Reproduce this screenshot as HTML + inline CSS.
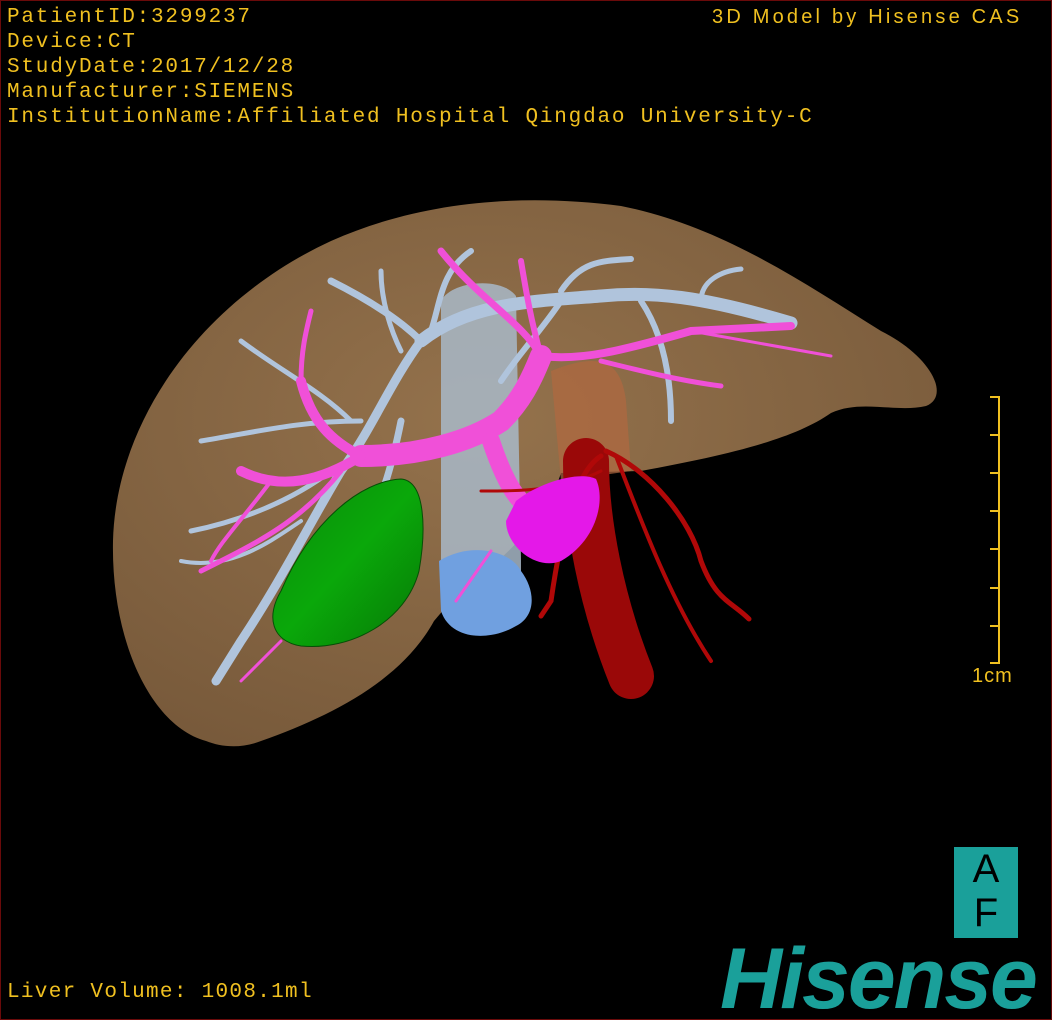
<!DOCTYPE html>
<html><head><meta charset="utf-8"><style>
html,body{margin:0;padding:0;background:#000}
#c{position:relative;width:1050px;height:1018px;border:1px solid #6a0a0a;background:#000;overflow:hidden;font-family:"Liberation Mono","DejaVu Sans Mono",monospace}
.t{position:absolute;color:#f0c020;font-size:21px;line-height:25px;white-space:pre;letter-spacing:1.8px}
</style></head><body><div id="c">
<svg width="1050" height="1018" style="position:absolute;left:0;top:0">
<defs>
<radialGradient id="lv" cx="0.45" cy="0.4" r="0.7"><stop offset="0" stop-color="#94724c"/><stop offset="1" stop-color="#77593a"/></radialGradient>
<linearGradient id="gb" x1="0" y1="0" x2="1" y2="1"><stop offset="0" stop-color="#0a8a0a"/><stop offset="0.5" stop-color="#0aa80a"/><stop offset="1" stop-color="#067806"/></linearGradient>
</defs>
<path d="M205 740 C150 725 110 640 112 540 C115 420 200 300 330 240 C420 200 520 192 620 205 C720 225 800 280 880 330 C930 355 950 395 925 405 C895 412 860 398 830 412 C790 440 720 455 640 470 L560 472 C545 520 500 560 450 600 L433 620 C400 680 330 715 260 740 C240 748 220 746 205 740 Z" fill="url(#lv)"/>
<path d="M550 370 C600 350 620 360 625 400 L630 470 L560 480 Z" fill="#b06840" opacity="0.7"/>
<path d="M440 300 C450 280 500 275 515 295 L520 560 L520 620 C500 640 450 640 440 600 Z" fill="#a8b8c8" opacity="0.85"/>
<path d="M438 560 C470 540 510 550 520 570 C535 590 535 615 515 625 C490 640 450 640 440 610 Z" fill="#70a0e0"/>
<g stroke="#b0c4dc" fill="none" stroke-linecap="round">
<path d="M420 340 C470 300 540 300 600 295 C650 290 700 295 790 322" stroke-width="13"/>
<path d="M420 340 C390 380 370 430 340 470 C310 520 280 580 240 640 L215 680" stroke-width="9"/>
<path d="M430 330 C440 300 440 270 470 250" stroke-width="6"/>
<path d="M330 280 C370 300 400 320 420 340" stroke-width="7"/>
<path d="M240 340 C280 370 320 390 350 420" stroke-width="5"/>
<path d="M200 440 C260 430 300 420 360 420" stroke-width="5"/>
<path d="M190 530 C240 520 290 500 330 470" stroke-width="5"/>
<path d="M180 560 C230 570 270 540 300 520" stroke-width="4"/>
<path d="M400 420 C390 470 380 500 360 540" stroke-width="7"/>
<path d="M560 290 C580 260 600 260 630 258" stroke-width="6"/>
<path d="M640 300 C660 330 670 370 670 420" stroke-width="6"/>
<path d="M700 300 C700 280 720 270 740 268" stroke-width="5"/>
<path d="M560 300 C540 330 520 350 500 380" stroke-width="6"/>
<path d="M380 270 C380 300 390 330 400 350" stroke-width="5"/>
</g>
<g stroke="#f050d8" fill="none" stroke-linecap="round">
<path d="M360 455 C420 455 470 440 500 420 C520 400 530 380 540 355" stroke-width="22"/>
<path d="M490 440 C500 470 510 490 520 500" stroke-width="18"/>
<path d="M540 355 C580 360 620 350 690 330 L790 325" stroke-width="8"/>
<path d="M540 355 C520 320 480 300 440 250" stroke-width="7"/>
<path d="M540 355 C530 320 525 290 520 260" stroke-width="6"/>
<path d="M360 455 C330 440 310 420 300 380" stroke-width="10"/>
<path d="M360 455 C320 480 280 490 240 470" stroke-width="10"/>
<path d="M340 470 C300 520 260 540 200 570" stroke-width="5"/>
<path d="M600 360 C640 370 680 380 720 385" stroke-width="5"/>
<path d="M300 380 C300 350 305 330 310 310" stroke-width="5"/>
<path d="M270 480 C240 520 220 540 210 560" stroke-width="4"/>
<path d="M690 330 L830 355" stroke-width="3"/>
<path d="M490 550 L455 600" stroke-width="3"/>
<path d="M280 640 L240 680" stroke-width="3"/>
</g>
<path d="M280 590 C310 520 360 480 400 478 C425 480 425 530 418 570 C405 620 350 650 300 645 C270 640 265 615 280 590 Z" fill="url(#gb)" stroke="#064e06" stroke-width="1"/>
<g stroke="#b00808" fill="none" stroke-linecap="round">
<path d="M585 460 C585 520 600 600 630 675" stroke-width="46" stroke="#9a0808"/>
<path d="M605 450 C650 470 690 520 700 560 C715 600 730 600 748 618" stroke-width="5"/>
<path d="M615 455 C640 520 670 600 710 660" stroke-width="4"/>
<path d="M600 455 C575 470 560 530 550 600 L540 615" stroke-width="5"/>
<path d="M600 470 C560 490 520 490 480 490" stroke-width="3"/>
</g>
<path d="M515 500 C540 480 580 470 595 478 C605 500 595 540 560 560 C535 570 505 545 505 520 Z" fill="#e418e8"/>
</svg>
<div class="t" style="left:6px;top:4px">PatientID:3299237
Device:CT
StudyDate:2017/12/28
Manufacturer:SIEMENS
InstitutionName:Affiliated Hospital Qingdao University-C</div>
<div class="t" style="left:711px;top:4px;font-family:'Liberation Sans',sans-serif;font-size:20px;letter-spacing:3.2px">3D Model by Hisense CAS</div>
<div class="t" style="left:6px;top:979px;letter-spacing:1.3px">Liver Volume: 1008.1ml</div>
<svg width="1050" height="1018" style="position:absolute;left:0;top:0">
<g stroke="#f0c020" stroke-width="2"><line x1="998" y1="395" x2="998" y2="663"/>
<line x1="989" y1="396" x2="998" y2="396"/><line x1="989" y1="434" x2="998" y2="434"/><line x1="989" y1="472" x2="998" y2="472"/><line x1="989" y1="510" x2="998" y2="510"/><line x1="989" y1="548" x2="998" y2="548"/><line x1="989" y1="587" x2="998" y2="587"/><line x1="989" y1="625" x2="998" y2="625"/><line x1="989" y1="662" x2="998" y2="662"/></g>
</svg>
<div class="t" style="left:971px;top:663px;font-family:'Liberation Sans',sans-serif;font-size:20px;letter-spacing:1px">1cm</div>
<div style="position:absolute;left:953px;top:846px;width:64px;height:91px;background:#1aa09a;color:#000;font-family:'Liberation Sans',sans-serif;font-size:40px;text-align:center;line-height:44px">A<br>F</div>
<div style="position:absolute;left:719px;top:932px;color:#1aa09a;font-family:'Liberation Sans',sans-serif;font-weight:bold;font-style:italic;font-size:86px;letter-spacing:-2px;line-height:92px;white-space:nowrap">Hisense</div>
</div></body></html>
